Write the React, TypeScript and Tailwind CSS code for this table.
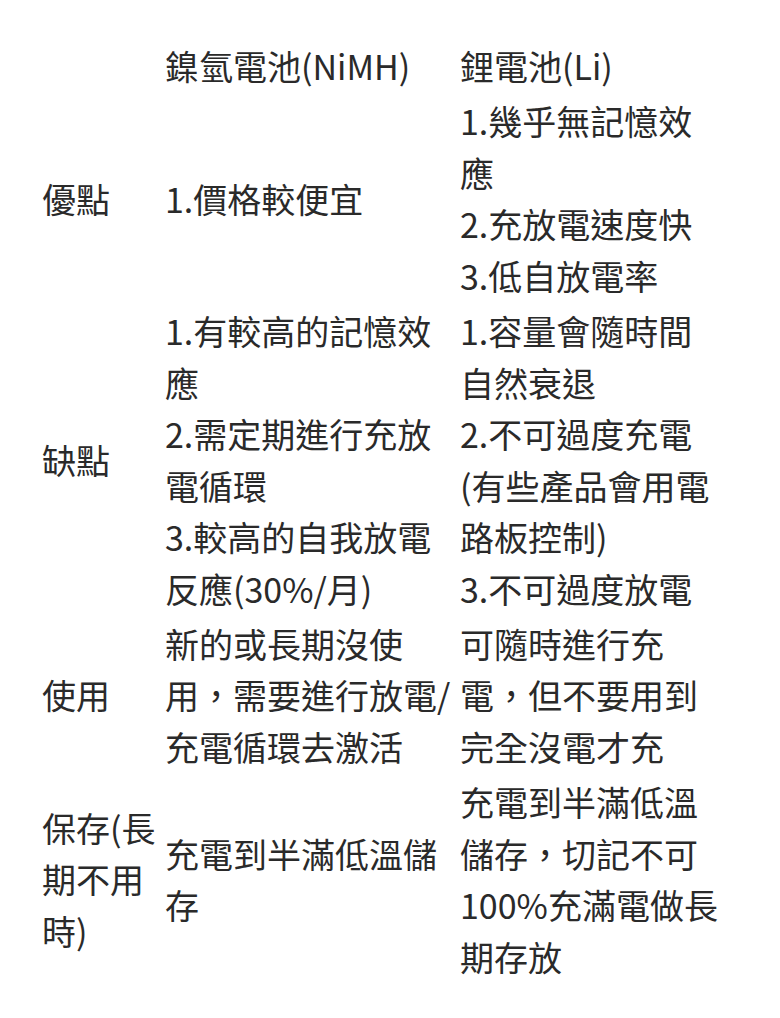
import React from "react";

const rows: { a: string[]; b: string[]; c: string[] }[] = [
  { a: [], b: ["鎳氫電池(NiMH)"], c: ["鋰電池(Li)"] },
  {
    a: ["優點"],
    b: ["1.價格較便宜"],
    c: ["1.幾乎無記憶效", "應", "2.充放電速度快", "3.低自放電率"],
  },
  {
    a: ["缺點"],
    b: ["1.有較高的記憶效", "應", "2.需定期進行充放", "電循環", "3.較高的自我放電", "反應(30%/月)"],
    c: ["1.容量會隨時間", "自然衰退", "2.不可過度充電", "(有些產品會用電", "路板控制)", "3.不可過度放電"],
  },
  {
    a: ["使用"],
    b: ["新的或長期沒使", "用，需要進行放電/", "充電循環去激活"],
    c: ["可隨時進行充", "電，但不要用到", "完全沒電才充"],
  },
  {
    a: ["保存(長", "期不用", "時)"],
    b: ["充電到半滿低溫儲", "存"],
    c: ["充電到半滿低溫", "儲存，切記不可", "100%充滿電做長", "期存放"],
  },
];

function Cell({ lines, w }: { lines: string[]; w: string }) {
  return (
    <td className={`${w} px-[2px] py-[1.7px] align-middle`}>
      {lines.map((l, i) => (
        <div key={i} className="whitespace-nowrap">
          {l}
        </div>
      ))}
    </td>
  );
}

export default function App() {
  return (
    <div
      className="w-[780px] h-[1018px] bg-white text-[#2a2a2a] text-[34px] leading-[51.6px] pt-[38.5px] pl-[40px] overflow-hidden"
      style={{ fontFamily: '"Noto Sans CJK TC", "Noto Sans", sans-serif' }}
    >
      <table className="border-collapse">
        <tbody>
          {rows.map((r, i) => (
            <tr key={i}>
              <Cell lines={r.a} w="w-[123px]" />
              <Cell lines={r.b} w="w-[295px]" />
              <Cell lines={r.c} w="w-[300px]" />
            </tr>
          ))}
        </tbody>
      </table>
    </div>
  );
}
